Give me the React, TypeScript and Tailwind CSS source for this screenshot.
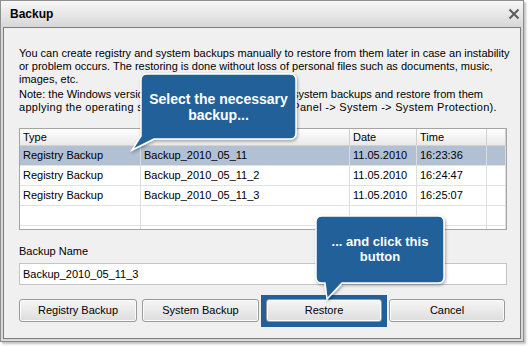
const ROWS = [
  { type: 'Registry Backup', name: 'Backup_2010_05_11', date: '11.05.2010', time: '16:23:36', selected: true },
  { type: 'Registry Backup', name: 'Backup_2010_05_11_2', date: '11.05.2010', time: '16:24:47', selected: false },
  { type: 'Registry Backup', name: 'Backup_2010_05_11_3', date: '11.05.2010', time: '16:25:07', selected: false },
];

const COLS = 'grid grid-cols-[121px_209px_67px_70px_1fr]';

function Btn({ label, w }: { label: string; w: string }) {
  return (
    <button
      type="button"
      className={`${w} h-[23px] rounded-[3px] border border-[#9a9a9a] bg-gradient-to-b from-[#f6f6f6] to-[#dddddd] text-[11px] text-black shadow-[inset_0_0_0_1px_#fbfbfb]`}
    >
      {label}
    </button>
  );
}

export default function App() {
  return (
    <div className="relative w-[528px] h-[346px] bg-white font-['Liberation_Sans',Arial,sans-serif] text-[11px] leading-[13px] text-black">
      <div className="w-[524px] h-[342px] border border-[#8f8f8f] bg-[#d9d9d9] flex flex-col shadow-[2px_2px_2px_rgba(0,0,0,0.25)]">
        {/* title bar */}
        <div className="h-[26px] flex items-center justify-between pl-[9px] pr-[3px] bg-gradient-to-b from-[#f7f7f7] to-[#d7d7d7]">
          <span className="font-bold text-[12px]">Backup</span>
          <svg width="12" height="12" viewBox="0 0 12 12">
            <path d="M1.5 1.5 L10.5 10.5 M10.5 1.5 L1.5 10.5" stroke="#5c5c5c" strokeWidth="2" />
          </svg>
        </div>

        {/* body */}
        <div className="flex-1 mx-[2px] mb-[2px] border border-[#7d7d7d] bg-[#f0f0f0] px-[15px] pt-[19px]">
          <div className="whitespace-nowrap">
            <div>You can create registry and system backups manually to restore from them later in case an instability</div>
            <div>or problem occurs. The restoring is done without loss of personal files such as documents, music,</div>
            <div>images, etc.</div>
          </div>
          <div className="mt-[2px] whitespace-nowrap">
            <div>Note: the Windows version allows to create registry and system backups and restore from them</div>
            <div className="tracking-[0.3px]">
              applying the operating system tools (Start -&gt; Control Panel -&gt; System -&gt; System Protection).
            </div>
          </div>

          {/* table */}
          <div className="mt-[14px] w-[488px] h-[102px] border border-[#a5a5a5] bg-white overflow-hidden">
            <div className={`${COLS} h-[17px] bg-gradient-to-b from-white to-[#e9e9e9] border-b border-[#d2d2d2]`}>
              {['Type', '', 'Date', 'Time', ''].map((h, i) => (
                <div key={i} className="pl-[3px] leading-[16px] border-r border-[#d0d0d0]">{h}</div>
              ))}
            </div>
            {ROWS.map(r => (
              <div
                key={r.name}
                className={`${COLS} h-[20px] border-b border-[#e2e2e2] ${r.selected ? 'bg-[#b2c0d4]' : 'bg-white'}`}
              >
                {[r.type, r.name, r.date, r.time, ''].map((c, i) => (
                  <div key={i} className="pl-[3px] leading-[19px] border-r border-[#dcdcdc]">{c}</div>
                ))}
              </div>
            ))}
            <div className={`${COLS} h-[20px] border-b border-[#e2e2e2]`}>
              {[0, 1, 2, 3, 4].map(i => (
                <div key={i} className="border-r border-[#dcdcdc]" />
              ))}
            </div>
            <div className={`${COLS} h-[20px]`}>
              {[0, 1, 2, 3, 4].map(i => (
                <div key={i} className="border-r border-[#dcdcdc]" />
              ))}
            </div>
          </div>

          <div className="mt-[15px]">Backup Name</div>
          <div className="mt-[5px] w-[488px] h-[22px] border border-[#c4c4c4] bg-white pl-[3px] leading-[20px]">
            Backup_2010_05_11_3
          </div>

          <div className="mt-[14px] flex items-start">
            <Btn label="Registry Backup" w="w-[118px]" />
            <div className="ml-[5px]">
              <Btn label="System Backup" w="w-[117px]" />
            </div>
            <div className="ml-[2px] -mt-[4px] pt-[4px] pb-[5px] px-[5px] bg-[#235f99]">
              <Btn label="Restore" w="w-[116px]" />
            </div>
            <div className="ml-[2px]">
              <Btn label="Cancel" w="w-[116px]" />
            </div>
          </div>
        </div>
      </div>

      {/* callouts */}
      <svg className="absolute inset-0 pointer-events-none" width="528" height="346" viewBox="0 0 528 346">
        <defs>
          <filter id="sh" x="-10%" y="-10%" width="130%" height="130%">
            <feDropShadow dx="1" dy="1.5" stdDeviation="1.5" floodColor="#000" floodOpacity="0.35" />
          </filter>
        </defs>
        <path
          d="M147 74 H290 Q296 74 296 80 V133 Q296 139 290 139 H154 L132 150 L141 136 V80 Q141 74 147 74 Z"
          fill="#24609a"
          stroke="#fff"
          strokeWidth="1.5"
          filter="url(#sh)"
        />
        <path
          d="M322 216 H438 Q444 216 444 222 V277 Q444 283 438 283 H342 L327 299 L325 283 H322 Q316 283 316 277 V222 Q316 216 322 216 Z"
          fill="#24609a"
          stroke="#fff"
          strokeWidth="1.5"
          filter="url(#sh)"
        />
      </svg>
      <div className="absolute left-[141px] top-[91px] w-[155px] text-center text-white font-bold text-[14px] leading-[16px]">
        Select the necessary
        <br />
        backup...
      </div>
      <div className="absolute left-[316px] top-[234px] w-[128px] text-center text-white font-bold text-[13px] leading-[15px]">
        ... and click this
        <br />
        button
      </div>
    </div>
  );
}
